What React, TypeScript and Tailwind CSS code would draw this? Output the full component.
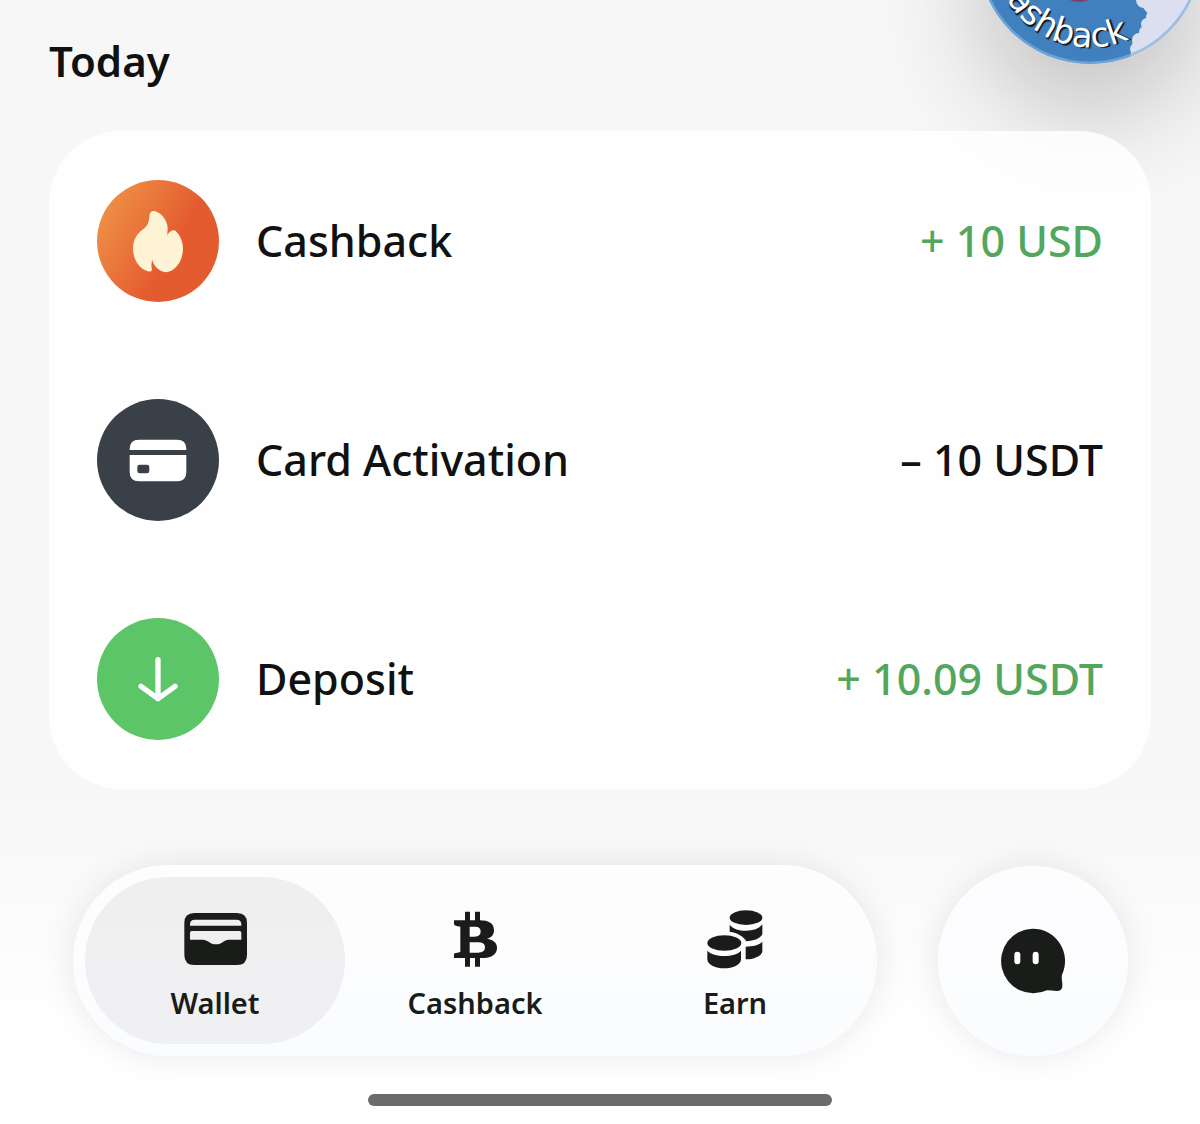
import type { ReactNode } from "react"

function FlameIcon() {
  return (
    <svg viewBox="19 26 192 192" className="w-16 h-16" fill="#fef3d5" aria-hidden="true">
      <path d="M104 32C122 36 142 56 144 82Q144 94 142 106C146 98 154 90 163 90C170 90 190 114 190 144C190 184 166 214 138 216C120 214 102 198 98 179C94 190 95 200 97 208Q96 216 84 213C60 206 40 178 40 146C40 112 58 96 74 84C88 73 88 56 90 42Q93 30 104 32Z"/>
    </svg>
  )
}

function CardIcon() {
  return (
    <svg viewBox="139 114 192 192" className="w-16 h-16" fill="#fff" aria-hidden="true">
      <path d="M150 180V177Q150 149 178 149H292Q320 149 320 177V180Z"/>
      <path fillRule="evenodd" d="M150 195H320V246Q320 274 292 274H178Q150 274 150 246ZM180 224Q173 224 173 231V243Q173 250 180 250H202Q209 250 209 243V231Q209 224 202 224Z"/>
    </svg>
  )
}

function ArrowIcon() {
  return (
    <svg viewBox="139 112 192 192" className="w-16 h-16" fill="none" stroke="#fff" strokeWidth="16" strokeLinecap="round" strokeLinejoin="round" aria-hidden="true">
      <path d="M235 150V267M184 230L235 267L286 230"/>
    </svg>
  )
}

function WalletIcon() {
  return (
    <svg viewBox="0 0 192 192" className="w-16 h-16" fill="#1a1c19" aria-hidden="true">
      <path fillRule="evenodd" d="M34 12H162Q192 12 192 42V138Q192 168 162 168H34Q4 168 4 138V42Q4 12 34 12ZM21 50V46Q21 32 35 32H161Q175 32 175 46V50ZM21 92V71Q21 66 26 66H170Q175 66 175 71V92H138C122 92 118 106 99 106S76 92 58 92Z"/>
    </svg>
  )
}

function BitcoinIcon() {
  return (
    <svg viewBox="0 0 192 192" className="w-16 h-16" fill="#1a1c19" aria-hidden="true">
      <path d="M66 8H81V40H66ZM96 8H111V40H96ZM66 142H81V173H66ZM96 142H111V173H96Z"/>
      <path fillRule="evenodd" d="M33 34H110C138 34 153 44 153 63C153 77 146 86 132 89C152 92 162 102 162 116C162 137 145 147 116 147H33V134Q33 132 43 131L52 129V53L41 51Q33 50 33 46ZM80 53V83H95Q113 83 113 67Q113 53 97 53ZM80 100V131H105Q126 131 126 115T103 100Z"/>
    </svg>
  )
}

function CoinsIcon() {
  return (
    <svg viewBox="0 0 192 192" className="w-16 h-16" fill="#1a1c19" aria-hidden="true">
      <ellipse cx="129" cy="26" rx="49" ry="22"/>
      <path d="M80 47C90 60 108 65 129 65S168 60 178 46V76C172 88 152 96 130 97C122 82 104 72 80 68Z"/>
      <path d="M128 113C150 112 168 108 178 98V128C174 142 152 151 128 151Z"/>
      <ellipse cx="64" cy="102" rx="51" ry="23"/>
      <path d="M13 125C24 136 42 141 64 141S104 136 114 125V152C112 168 90 178 64 178S15 168 13 152Z"/>
    </svg>
  )
}

function ChatIcon() {
  return (
    <svg viewBox="241 236 198 198" className="w-[66px] h-[66px]" fill="#1a1c19" aria-hidden="true">
      <path d="M338 238A97 97 0 0 1 427 376Q425 386 428 402V408Q429 425 411 425Q396 423 382 423A97 97 0 1 1 338 238Z"/>
      <rect x="284" y="307" width="18" height="38" rx="9" fill="#fff"/>
      <rect x="339" y="307" width="18" height="38" rx="9" fill="#fff"/>
    </svg>
  )
}

function PromoBadge() {
  return (
    <a href="#promo" aria-label="Cashback" className="absolute -top-40 -right-0.5 w-56 h-56 rounded-full shadow-[0_50px_110px_0_rgba(0,0,0,0.22)]">
      <svg viewBox="0 0 224 224" className="w-full h-full">
        <defs>
          <clipPath id="disc"><circle cx="112" cy="112" r="112"/></clipPath>
          <path id="rim" d="M16 112A96 96 0 0 0 151 199"/>
        </defs>
        <g clipPath="url(#disc)">
          <rect width="224" height="224" fill="#4080bf"/>
          <g fill="#dcdff0">
            <path d="M157 150L166 169L172 176L164 192L155 200L152 218L224 224V120H157Z"/>
            <circle cx="166" cy="160" r="8"/>
            <circle cx="176" cy="170" r="6"/>
            <circle cx="174" cy="177" r="6"/>
            <circle cx="169" cy="184" r="6"/>
            <circle cx="167" cy="192" r="6"/>
            <circle cx="161" cy="200" r="7"/>
            <circle cx="158" cy="209" r="6"/>
          </g>
          <circle cx="112" cy="112" r="111" fill="none" stroke="#7fb0e0" strokeOpacity="0.7" strokeWidth="3"/>
          <ellipse cx="101" cy="148" rx="18" ry="14" fill="#7d3f6b"/>
        </g>
        <text textAnchor="end" fill="#fff" className="text-[34px] font-['DejaVu_Sans',sans-serif] [text-shadow:2px_1px_1px_#10151d]">
          <textPath href="#rim" startOffset="100%">Cashback</textPath>
        </text>
      </svg>
    </a>
  )
}

interface Tx { title: string; amount: string; color: string; bg: string; icon: ReactNode }

const transactions: Tx[] = [
  { title: "Cashback", amount: "+ 10 USD", color: "text-[#53a75d]", bg: "bg-linear-120 from-[#ee9549] from-5% to-[#e45b2f] to-60%", icon: <FlameIcon/> },
  { title: "Card Activation", amount: "– 10 USDT", color: "text-[#111]", bg: "bg-[#3a4048]", icon: <CardIcon/> },
  { title: "Deposit", amount: "+ 10.09 USDT", color: "text-[#53a75d]", bg: "bg-[#5cc567]", icon: <ArrowIcon/> },
]

const tabs = [
  { label: "Wallet", icon: <WalletIcon/>, active: true },
  { label: "Cashback", icon: <BitcoinIcon/>, active: false },
  { label: "Earn", icon: <CoinsIcon/>, active: false },
]

export default function App() {
  const floating = "shadow-[0_0_36px_rgba(0,0,0,0.09)]"

  return (
    <div className="relative overflow-hidden min-h-screen pt-9 pb-4 bg-linear-to-b from-[#f7f7f7] from-70% to-white to-92% font-['Noto_Sans',sans-serif] text-[#111]">
      <PromoBadge/>

      <main className="relative px-[49px]">
        <h1 className="text-[42px] leading-[50px] font-semibold mb-[45px]">Today</h1>
        <ul className="flex flex-col gap-[97px] px-12 py-[49px] rounded-[72px] bg-white/85">
          {transactions.map(t => (
            <li key={t.title} className="flex items-center gap-[37px]">
              <div className={"w-[122px] h-[122px] rounded-full flex items-center justify-center shrink-0 " + t.bg}>{t.icon}</div>
              <span className="flex-1 text-[43px] leading-[50px] font-medium">{t.title}</span>
              <span className={"text-[43px] leading-[50px] font-medium " + t.color}>{t.amount}</span>
            </li>
          ))}
        </ul>
      </main>

      <div className="flex items-center gap-[61px] pl-[73px] pr-[72px] mt-[76px]">
        <nav className={"flex-1 flex p-3 rounded-full bg-linear-to-b from-[#fdfdfd] to-[#fbfcff] " + floating}>
          {tabs.map(t => (
            <button key={t.label} className={"flex-1 h-[167px] pt-2 flex flex-col items-center justify-center gap-3 rounded-full " + (t.active ? "bg-linear-to-b from-[#efefef] to-[#eff0f3]" : "")}>
              {t.icon}
              <span className="text-[29px] leading-9 font-semibold text-[#1a1c19]">{t.label}</span>
            </button>
          ))}
        </nav>
        <button aria-label="Support chat" className={"w-[190px] h-[190px] rounded-full flex items-center justify-center shrink-0 bg-linear-to-b from-[#fdfdfe] to-[#fbfcff] " + floating}>
          <ChatIcon/>
        </button>
      </div>

      <div className="w-[464px] h-3 mx-auto mt-[38px] rounded-full bg-[#6b6b6b]"/>
    </div>
  )
}
